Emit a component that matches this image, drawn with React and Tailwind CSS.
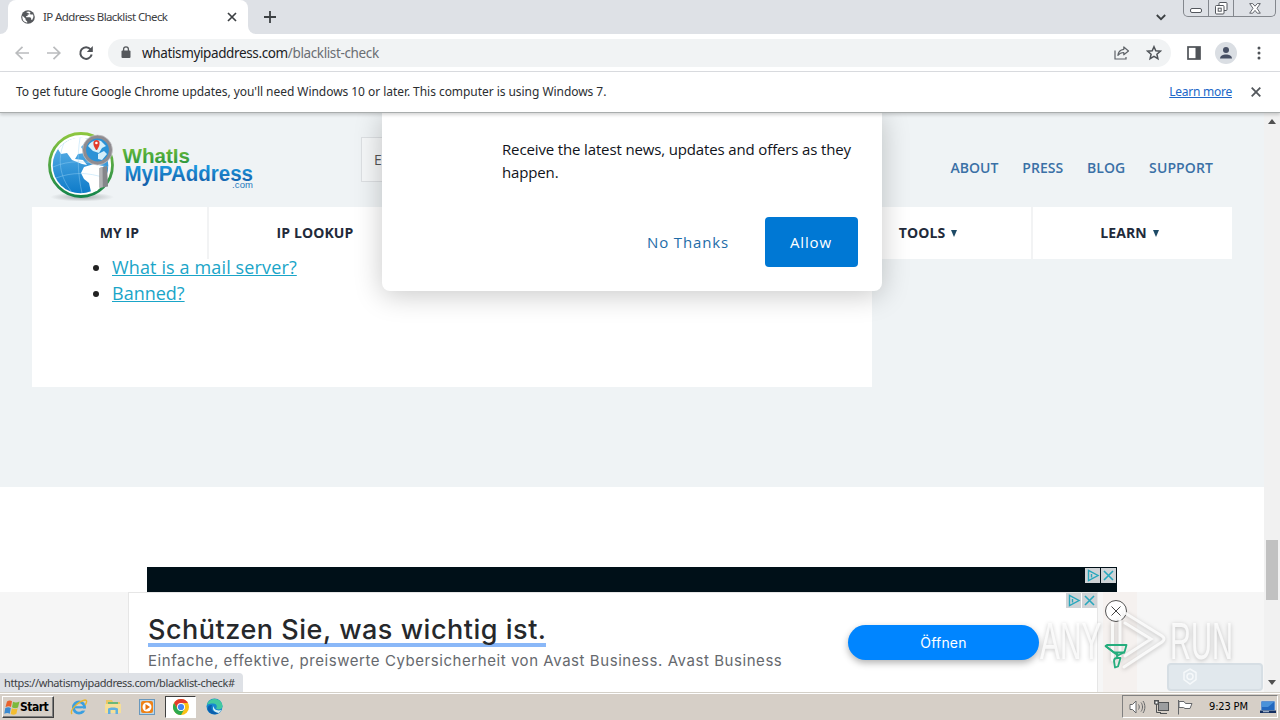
import React from "react";

const chromeFont = "font-['Noto_Sans','Open_Sans',sans-serif]";
const pageFont = "font-['Open_Sans','Noto_Sans',sans-serif]";

function GlobeIcon() {
  return (
    <svg width="14" height="14" viewBox="0 0 14 14">
      <circle cx="7" cy="7" r="6.8" fill="#55585c" />
      <path
        d="M1.6 5.8 4.6 8.8V10l1.6 1.4v1.3A5.7 5.7 0 0 1 1.3 7zM5 1.9 7.5 1.4 9.3 2v1.3L8 4.6H6.6v1.5H5.2V7.2h4l.9 1v1.6h1.2a5.6 5.6 0 0 0 .9-5.2l-2.4-.1"
        fill="#fff"
      />
    </svg>
  );
}

function TabStrip() {
  return (
    <div className="h-[34px] flex bg-[#dee1e6]">
      <div className="w-2 h-full bg-white">
        <div className="w-full h-full bg-[#dee1e6] rounded-br-lg" />
      </div>
      <div className="w-[240px] h-full bg-white rounded-t-lg flex items-center pl-[13px]">
        <GlobeIcon />
        <span
          className={`${chromeFont} ml-2 text-[11.5px] tracking-[-0.6px] text-[#3c4043] whitespace-nowrap w-[184px]`}
        >
          IP Address Blacklist Check
        </span>
        <svg width="10" height="10" viewBox="0 0 10 10" className="shrink-0">
          <path d="M1 1l8 8M9 1 1 9" stroke="#3c4043" strokeWidth="1.7" />
        </svg>
      </div>
      <div className="w-2 h-full bg-white">
        <div className="w-full h-full bg-[#dee1e6] rounded-bl-lg" />
      </div>
      <svg width="12" height="12" viewBox="0 0 12 12" className="ml-2 mt-[11px]">
        <path d="M6 0v12M0 6h12" stroke="#3c4043" strokeWidth="1.8" />
      </svg>
      <svg width="10" height="7" viewBox="0 0 10 7" className="ml-auto mt-[14px]">
        <path d="M.8 1 5 5.2 9.2 1" fill="none" stroke="#3c4043" strokeWidth="1.8" />
      </svg>
      <div className="ml-[17px] mr-[4px] w-[93px] h-[17px] flex border border-t-0 border-[#83878d] rounded-b-[5px]">
        <div className="w-[25px] flex justify-center border-r border-[#83878d]">
          <svg width="13" height="6" viewBox="0 0 13 6" className="mt-2">
            <rect x=".5" y=".5" width="11" height="4" rx="1.5" fill="#fff" stroke="#53575d" />
          </svg>
        </div>
        <div className="w-[25px] flex justify-center border-r border-[#83878d]">
          <svg width="13" height="13" viewBox="0 0 13 13" className="mt-[2px]">
            <rect x="4" y=".5" width="8" height="8" rx="1" fill="#fff" stroke="#53575d" />
            <rect x=".5" y="3.5" width="8.5" height="8.5" rx="1" fill="#fff" stroke="#53575d" />
            <rect x="3.2" y="6.2" width="3" height="3" fill="none" stroke="#53575d" />
          </svg>
        </div>
        <div className="flex-1 flex justify-center">
          <svg width="12" height="11" viewBox="0 0 12 11" className="mt-[3px]">
            <path
              d="M.7.6h3L6 3.2 8.3.6h3L8 5.3l3.3 4.9h-3L6 7.4l-2.3 2.8h-3L4 5.3z"
              fill="#fff"
              stroke="#53575d"
              strokeWidth=".9"
            />
          </svg>
        </div>
      </div>
    </div>
  );
}

function Toolbar() {
  return (
    <div className="h-[38px] flex items-center bg-white border-b border-[#dadce0]">
      <svg width="96" height="18" viewBox="0 0 96 18" className="shrink-0" fill="none">
        <path d="M29 9H16.5M22.5 2.8 16.2 9l6.3 6.2" stroke="#babcbe" strokeWidth="1.7" />
        <path d="M47 9h12.5M53.5 2.8 59.8 9l-6.3 6.2" stroke="#babcbe" strokeWidth="1.7" />
        <path d="M90.6 5.4A5.8 5.8 0 1 0 91.7 10.6" stroke="#505358" strokeWidth="2" />
        <path d="M92.8 2v6h-6z" fill="#505358" />
      </svg>
      <div className="ml-3 w-[1063px] h-7 rounded-full bg-[#f1f3f4] flex items-center pl-[13px] pr-[9px]">
        <svg width="10" height="13" viewBox="0 0 10 13">
          <rect x=".5" y="4.5" width="9" height="7.5" rx="1" fill="#55585c" />
          <path d="M2.6 5V3.2a2.4 2.4 0 0 1 4.8 0V5" fill="none" stroke="#55585c" strokeWidth="1.3" />
        </svg>
        <span
          className={`${chromeFont} ml-[11px] pt-[2px] text-[13.5px] tracking-[-0.37px] text-[#202124] whitespace-nowrap`}
        >
          whatismyipaddress.com<span className="text-[#6a6e73]">/blacklist-check</span>
        </span>
        <svg width="16" height="14" viewBox="0 0 16 14" className="ml-auto" fill="none" stroke="#5f6368" strokeWidth="1.2">
          <path d="M1 4.5V13h11v-2" />
          <path d="M9.8 1v2.3C6 3.8 4.2 6 3.9 9.3 5.3 7.4 7 6.5 9.8 6.5v2.3L14.5 5z" strokeLinejoin="round" />
        </svg>
        <svg width="16" height="16" viewBox="0 0 16 16" className="ml-4">
          <path
            d="m8 1.7 1.8 4.1 4.5.4-3.4 3 1 4.4L8 11.3l-3.9 2.3 1-4.4-3.4-3 4.5-.4z"
            fill="none"
            stroke="#4f5358"
            strokeWidth="1.5"
          />
        </svg>
      </div>
      <svg width="14" height="14" viewBox="0 0 14 14" className="ml-4">
        <rect x="1" y="1" width="12" height="12" fill="none" stroke="#4f5358" strokeWidth="1.7" />
        <path d="M8.5 1H13v12H8.5z" fill="#4f5358" />
      </svg>
      <div className="ml-[14px] w-[22px] h-[22px] rounded-full bg-[#dadee3] flex items-center justify-center">
        <svg width="14" height="14" viewBox="0 0 14 14" fill="#485064">
          <circle cx="7" cy="4" r="3" />
          <path d="M1 12.5c0-5.5 12-5.5 12 0z" />
        </svg>
      </div>
      <svg width="4" height="14" viewBox="0 0 4 14" className="ml-5" fill="#4f5358">
        <circle cx="2" cy="2" r="1.5" />
        <circle cx="2" cy="7" r="1.5" />
        <circle cx="2" cy="12" r="1.5" />
      </svg>
    </div>
  );
}

function InfoBar() {
  return (
    <div
      className={`${chromeFont} h-[41px] flex items-center bg-white border-b border-[#a9adad] pl-4 pr-[19px] text-[12px] whitespace-nowrap shadow-[0_2px_3px_rgba(0,0,0,0.16)] relative z-30`}
    >
      <span className="text-[#2b2e31] tracking-[-0.05px]">
        To get future Google Chrome updates, you'll need Windows 10 or later. This computer is using Windows 7.
      </span>
      <a href="#" className="ml-auto text-[#2067c8] underline tracking-[-0.25px]">
        Learn more
      </a>
      <svg width="10" height="10" viewBox="0 0 10 10" className="ml-[19px]">
        <path d="M.7.7l8.6 8.6M9.3.7.7 9.3" stroke="#53575c" strokeWidth="1.8" />
      </svg>
    </div>
  );
}

function Logo() {
  return (
    <svg width="216" height="80" viewBox="0 0 216 80">
      <defs>
        <linearGradient id="ring" x2="0" y2="1">
          <stop offset="0" stopColor="#8cc63f" />
          <stop offset="1" stopColor="#15854a" />
        </linearGradient>
        <linearGradient id="sea" x2="0" y2="1">
          <stop offset="0" stopColor="#63b6ea" />
          <stop offset="1" stopColor="#0e7bc9" />
        </linearGradient>
        <linearGradient id="green" x2="0" y2="1">
          <stop offset=".2" stopColor="#6cbb3a" />
          <stop offset=".9" stopColor="#26943f" />
        </linearGradient>
        <linearGradient id="blue" x2="0" y2="1">
          <stop offset=".2" stopColor="#1c9ae0" />
          <stop offset=".9" stopColor="#1460ab" />
        </linearGradient>
        <radialGradient id="floor">
          <stop offset="0" stopColor="#a9adb0" />
          <stop offset="1" stopColor="#a9adb0" stopOpacity="0" />
        </radialGradient>
      </defs>
      <ellipse cx="42" cy="72" rx="32" ry="4.5" fill="url(#floor)" />
      <circle cx="41" cy="40" r="31.5" fill="#fff" stroke="url(#ring)" strokeWidth="2.8" />
      <circle cx="40.5" cy="40.5" r="27.8" fill="url(#sea)" />
      <path
        d="M18 24c8-10 20-14 31-10l-8 8 4 6-7 1-3 5 8 1 4 5-5-1-10-4-5-7-6 1zM44 42l10-3 9 2 3 3-1 9-8 13-6 1-2-9-5-4-3-6z"
        fill="#fff"
      />
      <path
        d="M13 42c16-7 34-7 55 0M16 53c16-6 32-6 49 0M24 18C17 34 20 52 31 66M40 13c-3 18-2 38 2 55"
        fill="none"
        stroke="#9bd4f5"
        strokeWidth=".6"
        opacity=".7"
      />
      <path d="m59.5 43 7.5-2 1 20.5-8.5 1.2z" fill="#85868a" />
      <path d="m59.5 43 3-.8.3 20-3.3.5z" fill="#b2b3b5" />
      <circle cx="57.5" cy="25" r="13.2" fill="#2b92d6" stroke="#8f8b90" strokeWidth="3.6" />
      <circle cx="57.5" cy="25" r="15" fill="none" stroke="#c9c9cb" strokeWidth=".7" />
      <path d="M48 21c3-5 8-7 13-5l5 5-4 2-3 5-6-2zM58 29l6-3 3 3-5 6-4-1z" fill="#d5effa" />
      <path d="M56 25c-4-6-3-10 .5-10s4.5 4 .5 10z" fill="#e23b2c" />
      <circle cx="56.4" cy="18" r="1.3" fill="#fff" />
      <g fontFamily="'Liberation Sans', Arial, sans-serif">
        <text
          x="82.5"
          y="38"
          fontSize="21"
          fontWeight="bold"
          textLength="67.5"
          lengthAdjust="spacingAndGlyphs"
          fill="url(#green)"
        >
          WhatIs
        </text>
        <text
          x="84.5"
          y="55.5"
          fontSize="22"
          fontWeight="bold"
          textLength="128.5"
          lengthAdjust="spacingAndGlyphs"
          fill="url(#blue)"
        >
          MyIPAddress
        </text>
        <text x="192" y="63" fontSize="9.5" textLength="21" fill="#2479bd">
          .com
        </text>
      </g>
    </svg>
  );
}

function SiteHeader() {
  return (
    <div className={`${pageFont} h-[94px] flex`}>
      <div className="ml-10 mt-3 w-[216px] h-[80px]">
        <Logo />
      </div>
      <div className="ml-[105px] mt-6 w-[340px] h-[45px] bg-[#f5f7f8] border border-[#dcdfe2] pl-3 flex items-center text-[14px] text-[#555]">
        E
      </div>
      <div className="ml-auto mr-[51px] h-5 mt-[45px] flex gap-6 text-[14px] leading-5 font-semibold text-[#3a70a6]">
        <a>ABOUT</a>
        <a>PRESS</a>
        <a>BLOG</a>
        <a className="tracking-[0.1px]">SUPPORT</a>
      </div>
    </div>
  );
}

const navItems = [
  { label: "MY IP", width: "w-[177px]" },
  { label: "IP LOOKUP", width: "w-[214px]" },
  { label: "", width: "w-[402px]" },
  { label: "TOOLS", width: "w-[208px]", arrow: true },
  { label: "LEARN", width: "w-[199px] pr-[6px]", arrow: true },
];

function MainNav() {
  return (
    <div className={`${pageFont} ml-8 w-[1200px] h-[52px] flex bg-white text-[14px] font-bold text-[#222a3a]`}>
      {navItems.map((item, i) => (
        <div
          key={i}
          className={`${item.width} shrink-0 flex items-center justify-center border-r-2 border-[#f2f3f4] last:border-r-0 pb-[2px] tracking-[0.1px]`}
        >
          {item.label}
          {item.arrow && (
            <svg width="6" height="7" viewBox="0 0 6 7" className="ml-[6px] mt-[2px]">
              <path d="M0 0h6L3 7z" fill="#1d4a66" />
            </svg>
          )}
        </div>
      ))}
    </div>
  );
}

function PushPrompt() {
  return (
    <div
      className={`${pageFont} absolute left-[382px] top-0 w-[500px] h-[178px] bg-white rounded-b-lg shadow-[0_4px_28px_rgba(0,0,0,0.22)] z-20 flex flex-col`}
    >
      <p className="ml-[120px] mt-[25px] text-[15px] leading-[23px] tracking-[-0.14px] text-[#10131a] whitespace-nowrap">
        Receive the latest news, updates and offers as they
        <br />
        happen.
      </p>
      <div className="mt-[33px] mr-6 flex justify-end items-center text-[15px]">
        <button className="text-[#1e6ca8] tracking-[0.85px] mr-9">No Thanks</button>
        <button className="w-[93px] h-[50px] rounded bg-[#0078d4] text-white tracking-[0.85px] pr-px">Allow</button>
      </div>
    </div>
  );
}

function AdChoices() {
  return (
    <svg width="31" height="15" viewBox="0 0 31 15" fill="none">
      <path d="M0 0h15v15H0zM16 0h15v15H16z" fill="#cfd3d6" />
      <path d="M3.5 2.5v10l9.5-5zM6.5 6v3.5M6.5 3.8v1" stroke="#27a7bd" strokeWidth="1.4" />
      <path d="m19 3 9 9M28 3l-9 9" stroke="#27a7bd" strokeWidth="1.6" />
    </svg>
  );
}

function StickyAd() {
  return (
    <div className="h-[100px] flex bg-[#f6f6f6]">
      <div className="ml-[128px] w-[970px] h-full bg-white border border-b-0 border-[#e6e6e6] flex">
        <div className="ml-[19px] font-['Inter','Roboto',sans-serif] whitespace-nowrap">
          <div className="mt-[18px] h-9 w-[398px] border-b-4 border-[#8ab8f8]">
            <span className="block text-[27px] leading-[38px] font-medium text-[#26282b] tracking-[0.52px]">
              Schützen Sie, was wichtig ist.
            </span>
          </div>
          <div className="mt-1 text-[15px] leading-5 text-[#66696e] tracking-[0.56px]">
            Einfache, effektive, preiswerte Cybersicherheit von Avast Business. Avast Business
          </div>
        </div>
        <button className="ml-auto mt-8 w-[191px] h-[35px] rounded-full bg-[#0085ff] text-white text-[14px] tracking-[0.2px] font-['Inter','Roboto',sans-serif] shadow-[0_3px_7px_rgba(0,0,0,0.3)]">
          Öffnen
        </button>
        <div className="ml-[27px]">
          <AdChoices />
        </div>
      </div>
      <div className="ml-[5px] w-[34px] bg-[#f5f1ef] flex flex-col items-center">
        <svg width="24" height="24" viewBox="0 0 24 24" fill="none" className="mt-[7px] -ml-2">
          <circle cx="12" cy="12" r="10.5" fill="#fff" stroke="#555" />
          <path d="m7.5 7.5 9 9M16.5 7.5l-9 9" stroke="#444" />
        </svg>
        <svg
          width="24"
          height="26"
          viewBox="0 0 24 26"
          fill="none"
          stroke="#25ad7d"
          strokeWidth="1.8"
          strokeLinejoin="round"
          className="mt-[20px] -ml-[9px] relative z-30"
        >
          <path d="M1.500 3 3 2h19.500l-2 7-6.500 3.500z" />
          <path d="M1.500 3 10 9.500h11M13 9.500V16M10 18c0-2 1-3 3-3h3.500L14 23.500l-3 1z" />
        </svg>
      </div>
      <div className="ml-[30px] mt-[71px] w-[96px] h-7 rounded-sm border-2 border-[#d6dee4] bg-[#e1e8ed] flex items-center pl-3">
        <svg width="18" height="18" viewBox="0 0 18 18" fill="none" stroke="#f5f8fa" strokeWidth="1.5">
          <path d="m9 1 6 3.500v7L9 16l-6-4.500v-7z" />
          <circle cx="9" cy="8.500" r="3" />
        </svg>
      </div>
    </div>
  );
}

function Watermark() {
  return (
    <svg
      width="228"
      height="84"
      viewBox="0 0 228 84"
      className="absolute left-[1036px] top-[486px] z-20 pointer-events-none [filter:drop-shadow(0_1px_2px_rgba(0,0,0,0.28))]"
    >
      <g fontFamily="'Liberation Sans', Arial, sans-serif" fontSize="51" fill="#fff" fillOpacity=".8">
        <text transform="translate(4 60) scale(.585 1)">ANY</text>
        <text transform="translate(134 60) scale(.57 1)">RUN</text>
      </g>
      <path
        d="M76.500 24v37M84 20v41M89 14l37 23q4 3 0 6L88 68M89 24l26 16-26 17"
        fill="none"
        stroke="#fff"
        strokeOpacity=".8"
        strokeWidth="3"
        strokeLinecap="round"
      />
    </svg>
  );
}

function Scrollbar() {
  return (
    <div className="w-4 h-full bg-[#f1f1f1] flex flex-col items-center">
      <svg width="8" height="5" viewBox="0 0 8 5" className="mt-[6px]">
        <path d="M0 5 4 0l4 5z" fill="#505050" />
      </svg>
      <div className="mt-[416px] w-3 h-[60px] bg-[#c1c1c1]" />
      <svg width="8" height="5" viewBox="0 0 8 5" className="mt-auto mb-[7px]">
        <path d="M0 0h8L4 5z" fill="#505050" />
      </svg>
    </div>
  );
}

function Taskbar() {
  return (
    <div className="h-7 flex items-center bg-[#d6cfc7] border-t border-[#d4d0c8] shadow-[inset_0_1px_0_#fff] font-['DejaVu_Sans_Condensed','DejaVu_Sans',sans-serif] text-black">
      <div className="ml-[2px] mt-[1px] w-[52px] h-[22px] bg-[#d6cfc7] border border-t-white border-l-white border-r-[#404040] border-b-[#404040] shadow-[inset_-1px_-1px_0_#808080] flex items-center pl-[1px]">
        <svg width="16" height="15" viewBox="0 0 16 15" className="shrink-0">
          <path d="M3 1.500c2-1.500 4-1 5-.2L7 7C5.500 6 4 6 1.500 7z" fill="#e8622d" />
          <path d="M9 1.800c2 1 4 1 6.500-.3l-1.500 6C12 8.600 10 8.500 8 7.300z" fill="#7cb93b" />
          <path d="M1.300 8c2-1 4-1 5.500 0l-1 5.700c-1.500-1-3.500-1-5.500 0z" fill="#3c8ad0" />
          <path d="M7.800 8.300c2 1 3.800 1 5.800-.1l-1.200 5.600c-2 1.200-4 1-5.700.1z" fill="#f4bd30" />
        </svg>
        <span className="text-[12px] font-bold tracking-[-0.5px]">Start</span>
      </div>
      <svg width="18" height="18" viewBox="0 0 18 18" className="ml-4" fill="none">
        <circle cx="9" cy="9.500" r="5.600" stroke="#3a9fe0" strokeWidth="2.800" />
        <path d="M4.500 9.300h9" stroke="#3a9fe0" strokeWidth="2.200" />
        <path d="M11.500 10.600h5v2h-5z" fill="#d6cfc7" />
        <path d="M2 16C-1 12 9 3 15 2c3 0 1 4 0 5" stroke="#e8b62f" strokeWidth="1.400" />
      </svg>
      <svg width="18" height="17" viewBox="0 0 18 17" className="ml-4">
        <path d="M2 2h6l1 2h7v10H2z" fill="#eac765" />
        <path d="M4 4h10v4H4z" fill="#6bb878" />
        <path d="M1 6h16v9H1z" fill="#f5df98" />
        <path d="M4 16V11c0-2 10-2 10 0v5h-2.500v-4h-5v4z" fill="#61b0df" />
      </svg>
      <svg width="16" height="16" viewBox="0 0 16 16" className="ml-[17px]">
        <rect x=".5" y=".5" width="15" height="15" fill="#b9d6ea" stroke="#6998bd" />
        <rect x="2" y="2" width="12" height="12" rx="2" fill="#ee8218" />
        <circle cx="8" cy="8" r="4.500" fill="#fff" />
        <path d="M6.500 5v6L11 8z" fill="#e5700e" />
      </svg>
      <div className="ml-[10px] w-[31px] h-[22px] bg-white border border-t-[#404040] border-l-[#404040] border-r-white border-b-white flex items-center justify-center">
        <svg width="16" height="16" viewBox="0 0 16 16">
          <circle cx="8" cy="8" r="8" fill="#fbc116" />
          <path d="M1.070 4A8 8 0 0 1 14.930 4H8L4.540 10z" fill="#e33b2e" />
          <path d="M1.070 4A8 8 0 0 0 8 16l3.460-6H4.540z" fill="#2da94f" />
          <circle cx="8" cy="8" r="4" fill="#fff" />
          <circle cx="8" cy="8" r="3.100" fill="#4285f4" />
        </svg>
      </div>
      <svg width="17" height="17" viewBox="0 0 17 17" className="ml-[10px]">
        <circle cx="8.500" cy="8.500" r="8" fill="#1688cf" />
        <path d="M1 7C3-1 15-1 16.500 7.500c.4 4-4.500 5-6.500 3C12 8 10 5.500 7 5.500S2 6 1 7z" fill="#42c9a0" />
        <path d="M6 7c-2 5 2 8.500 8 7-4 4-10 2.500-12-1.500C.5 9 3 6.500 6 7z" fill="#0b5fae" />
        <path d="M8 8c-1 3 3 5.500 7.500 4L13 15C9 15 5 11 8 8z" fill="#d6eef5" />
      </svg>
      <div className="ml-auto mr-[2px] w-[156px] h-[23px] border border-t-[#808080] border-l-[#808080] border-r-white border-b-white flex items-center pl-[6px]">
        <svg width="17" height="16" viewBox="0 0 17 16" fill="none" stroke="#66686a">
          <path d="M1 5.500h2.500L7 2v12l-3.500-3.500H1z" fill="#fff" />
          <path d="M9.500 5.500c1 1.500 1 3.500 0 5M12 3.500c2 2.500 2 6.500 0 9M14 2c2.500 3.500 2.500 8.500 0 12" />
        </svg>
        <svg width="16" height="16" viewBox="0 0 16 16" className="ml-[7px]" fill="none" stroke="#505254">
          <rect x="5.500" y="3.500" width="10" height="8" fill="#9b9d9f" />
          <path d="M7 14.500h7M1.500 1v4h4V1M3.500 5v8.500H8M1 1.500h5" />
          <path d="M2 2h3v3H2z" fill="#fff" />
        </svg>
        <svg width="17" height="16" viewBox="0 0 17 16" className="ml-2" fill="#fff" stroke="#65676a">
          <path d="M1.500 1v14.500M2 2.500h5l1.500 2H15l-2 5H8l-1.500-1H2z" />
        </svg>
        <span className="ml-[15px] pt-[2px] text-[11px] tracking-[-0.15px] whitespace-nowrap w-[41px]">9:23 PM</span>
        <svg width="16" height="14" viewBox="0 0 16 14" className="ml-[10px] shrink-0">
          <path d="M1 1h14v9.500H1z" fill="#2268bf" stroke="#cedded" strokeWidth=".7" />
          <path d="M2 2h12L8 7H2z" fill="#4992da" />
          <path d="M0 10.500h16V13H0z" fill="#132e60" />
          <path d="M3 11.700h6" stroke="#b8c9dc" />
        </svg>
      </div>
    </div>
  );
}

export default function App() {
  return (
    <div className="w-[1280px] h-[720px] overflow-hidden flex flex-col bg-white">
      <TabStrip />
      <Toolbar />
      <InfoBar />
      <div className="h-[579px] flex relative">
        <div className="w-[1264px] h-full flex flex-col">
          <div className="h-[374px] bg-[#eff3f5]">
            <SiteHeader />
            <MainNav />
            <div className={`${pageFont} ml-8 w-[840px] h-[128px] bg-white`}>
              <ul className="relative top-[-5px] pl-20 list-disc text-[18px] leading-[26px] text-[#222]">
                <li>
                  <a className="text-[#1aa5c8] underline tracking-[0.13px]">What is a mail server?</a>
                </li>
                <li>
                  <a className="text-[#1aa5c8] underline">Banned?</a>
                </li>
              </ul>
            </div>
          </div>
          <div className="h-[105px] bg-white flex items-end">
            <div className="ml-[147px] w-[970px] h-[25px] bg-[#001018] flex justify-end pt-px pr-px">
              <AdChoices />
            </div>
          </div>
          <StickyAd />
        </div>
        <Scrollbar />
        <PushPrompt />
        <Watermark />
        <div
          className={`${chromeFont} absolute left-0 bottom-0 w-[243px] h-[19px] bg-[#dee1e6] rounded-tr-[4px] pl-1 text-[11px] leading-[19px] tracking-[-0.4px] text-[#3c4043] whitespace-nowrap z-20`}
        >
          https://whatismyipaddress.com/blacklist-check#
        </div>
      </div>
      <Taskbar />
    </div>
  );
}
